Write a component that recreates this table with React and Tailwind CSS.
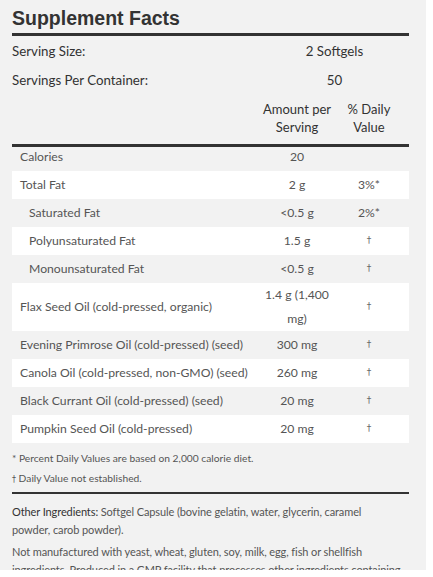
import React from "react";

const rows = [
  { name: "Calories", amt: "20", dv: "", indent: false },
  { name: "Total Fat", amt: "2 g", dv: "3%*", indent: false },
  { name: "Saturated Fat", amt: "<0.5 g", dv: "2%*", indent: true },
  { name: "Polyunsaturated Fat", amt: "1.5 g", dv: "†", indent: true },
  { name: "Monounsaturated Fat", amt: "<0.5 g", dv: "†", indent: true },
  { name: "Flax Seed Oil (cold-pressed, organic)", amt: "1.4 g (1,400 mg)", dv: "†", indent: false },
  { name: "Evening Primrose Oil (cold-pressed) (seed)", amt: "300 mg", dv: "†", indent: false },
  { name: "Canola Oil (cold-pressed, non-GMO) (seed)", amt: "260 mg", dv: "†", indent: false },
  { name: "Black Currant Oil (cold-pressed) (seed)", amt: "20 mg", dv: "†", indent: false },
  { name: "Pumpkin Seed Oil (cold-pressed)", amt: "20 mg", dv: "†", indent: false },
];

function Dagger() {
  return (
    <span
      className="text-[9px] text-[#666] align-[2px]"
      style={{ fontFamily: "'DejaVu Sans', sans-serif" }}
    >
      †
    </span>
  );
}

export default function App() {
  return (
    <div className="w-[433px] h-[577px] bg-white">
      <div
        className="w-[426px] h-[570px] overflow-hidden bg-[#f2f2f2] pl-[12px] pr-[17px] pt-[6px] text-[#333]"
        style={{ fontFamily: "Lato, 'Open Sans', sans-serif" }}
      >
        <h1
          className="text-[19.5px] font-bold leading-[24px] text-[#333]"
          style={{ fontFamily: "'Liberation Sans', Arial, sans-serif" }}
        >
          Supplement Facts
        </h1>
        <div className="mt-[3px] h-[2.5px] bg-[#333]" />
        <div className="mt-[2px] flex h-[29px] items-center text-[13.3px] text-[#333]">
          <div className="flex-1">Serving Size:</div>
          <div className="w-[149px] text-center">2 Softgels</div>
        </div>
        <div className="flex h-[29px] items-center text-[13.3px] text-[#333]">
          <div className="flex-1">Servings Per Container:</div>
          <div className="w-[149px] text-center">50</div>
        </div>
        <div className="flex items-center pt-[4px] pb-[8px] text-[13px] leading-[18px] text-[#333]">
          <div className="flex-1" />
          <div className="w-[94px] text-center">Amount per<br />Serving</div>
          <div className="w-[50px] text-center">% Daily<br />Value</div>
          <div className="w-[15px]" />
        </div>
        <div className="h-[3px] bg-[#333]" />
        <div className="text-[12.2px] text-[#555]">
          {rows.map((r, i) => (
            <div
              key={i}
              className={
                "flex " +
                (i === 0 ? "h-[24px] items-start leading-[20px] " : "min-h-[28px] items-center leading-[24px] ") +
                (i % 2 === 1 ? "bg-white" : "")
              }
            >
              <div className={"flex-1 min-w-0 whitespace-nowrap " + (r.indent ? "pl-[17px]" : "pl-[8px]")}>{r.name}</div>
              <div className="w-[94px] shrink-0 text-center px-[6px]">{r.amt}</div>
              <div className="w-[50px] shrink-0 text-center">{r.dv === "†" ? <Dagger /> : r.dv}</div>
              <div className="w-[15px] shrink-0" />
            </div>
          ))}
        </div>
        <div className="pt-[5px] text-[10.25px] leading-[20px] text-[#555]">
          <p>* Percent Daily Values are based on 2,000 calorie diet.</p>
          <p>
            <span className="text-[8px]" style={{ fontFamily: "'DejaVu Sans', sans-serif" }}>†</span> Daily Value not established.
          </p>
        </div>
        <div className="mt-[2px] h-[2.5px] bg-[#333]" />
        <div className="pt-[9px] text-[11px] tracking-[-0.1px] leading-[18px] text-[#555]">
          <p>
            <span className="text-[#333]">Other Ingredients:</span> Softgel Capsule (bovine gelatin, water, glycerin, caramel
            <br />
            powder, carob powder).
          </p>
          <p className="mt-[4px]">
            Not manufactured with yeast, wheat, gluten, soy, milk, egg, fish or shellfish
            <br />
            ingredients. Produced in a GMP facility that processes other ingredients containing
            <br />
            these allergens.
          </p>
        </div>
      </div>
    </div>
  );
}
